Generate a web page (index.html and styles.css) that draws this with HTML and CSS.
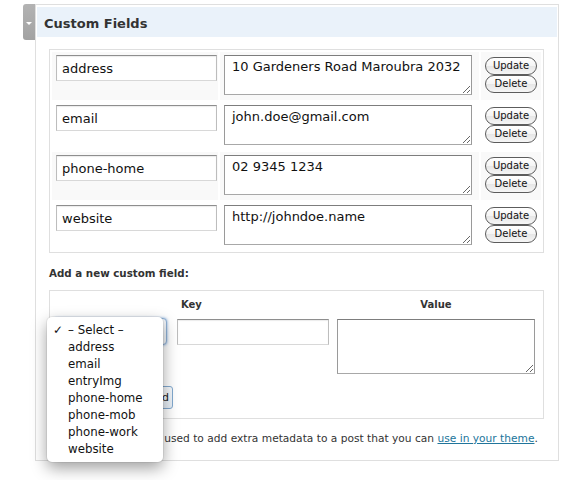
FILE: index.html
```html
<!DOCTYPE html>
<html>
<head>
<meta charset="utf-8">
<link rel="stylesheet" href="styles.css">
</head>
<body>
<div class="page">
  <div class="tab"><span class="arrow"></span></div>
  <div class="postbox">
    <h3 class="hndle">Custom Fields</h3>
    <div class="inside">
      <table class="meta">
        <tr class="alt">
          <td class="key"><input class="txt" type="text" value="address"></td>
          <td class="val"><textarea class="area">10 Gardeners Road Maroubra 2032</textarea></td>
          <td class="btns"><span class="pill">Update</span><span class="pill">Delete</span></td>
        </tr>
        <tr>
          <td class="key"><input class="txt" type="text" value="email"></td>
          <td class="val"><textarea class="area">john.doe@gmail.com</textarea></td>
          <td class="btns"><span class="pill">Update</span><span class="pill">Delete</span></td>
        </tr>
        <tr class="alt">
          <td class="key"><input class="txt" type="text" value="phone-home"></td>
          <td class="val"><textarea class="area">02 9345 1234</textarea></td>
          <td class="btns"><span class="pill">Update</span><span class="pill">Delete</span></td>
        </tr>
        <tr>
          <td class="key"><input class="txt" type="text" value="website"></td>
          <td class="val"><textarea class="area">http://johndoe.name</textarea></td>
          <td class="btns"><span class="pill">Update</span><span class="pill">Delete</span></td>
        </tr>
      </table>
      <p class="add-label">Add a new custom field:</p>
      <div class="newmeta">
        <div class="th-blank"></div>
        <div class="th th-key">Key</div>
        <div class="th th-val">Value</div>
        <div class="cell-select"><div class="fake-select"></div></div>
        <div class="cell-key"><input class="txt small" type="text"></div>
        <div class="cell-val"><textarea class="area big"></textarea></div>
        <div class="cell-submit"><span class="addbtn">Add Custom Field</span></div>
      </div>
      <p class="note">Custom fields can be used to add extra metadata to a post that you can <a href="#">use in your theme</a>.</p>
    </div>
  </div>
  <ul class="dropdown">
    <li class="checked">– Select –</li>
    <li>address</li>
    <li>email</li>
    <li>entryImg</li>
    <li>phone-home</li>
    <li>phone-mob</li>
    <li>phone-work</li>
    <li>website</li>
  </ul>
</div>
</body>
</html>
```

FILE: styles.css
```css
html, body {
  margin: 0;
  padding: 0;
  background: #fff;
}
body {
  font-family: "DejaVu Sans", Verdana, sans-serif;
  color: #333;
}
.page {
  position: relative;
  display: flex;
  align-items: flex-start;
  padding: 4px 0 0 23px;
  width: 571px;
  height: 480px;
  box-sizing: border-box;
}
.tab {
  width: 12px;
  height: 36px;
  background: linear-gradient(#b3b3b3, #a2a2a2);
  border-radius: 3px 0 0 3px;
  position: relative;
  flex: none;
}
.arrow {
  position: absolute;
  left: 3px;
  top: 18px;
  width: 0;
  height: 0;
  border-left: 3px solid transparent;
  border-right: 3px solid transparent;
  border-top: 3px solid #fff;
}
.postbox {
  width: 524px;
  height: 457px;
  box-sizing: border-box;
  border: 1px solid #dfdfdf;
  flex: none;
}
.hndle {
  margin: 2px 1px 0 1px;
  height: 26px;
  line-height: 26px;
  padding: 4px 0 0 7px;
  background: #eaf2fa;
  font-size: 13px;
  font-weight: bold;
  color: #333;
}
.inside {
  padding: 12px 14px 0 13px;
}
.meta {
  border: 1px solid #dfdfdf;
  border-spacing: 2px;
  width: 495px;
  table-layout: fixed;
}
.meta tr {
  height: 48px;
}
.meta td {
  padding: 3px 0 0 0;
  vertical-align: top;
}
.meta tr.alt td {
  background: #f9f9f9;
}
.meta td.key {
  width: 162px;
  padding-left: 4px;
}
.meta td.val {
  width: 255px;
  padding-left: 4px;
}
.meta td.btns {
  padding: 5px 0 0 4px;
}
.txt {
  display: block;
  box-sizing: border-box;
  width: 161px;
  height: 26px;
  margin: 0;
  padding: 0 5px;
  border: 1px solid;
  border-color: #8e8e8e #bdbdbd #d8d8d8 #bdbdbd;
  box-shadow: inset 0 1px 1px rgba(0,0,0,0.08);
  font-family: "DejaVu Sans", Verdana, sans-serif;
  font-size: 13px;
  color: #111;
  background: #fff;
  outline: none;
}
.txt.small {
  width: 152px;
}
.area {
  display: block;
  box-sizing: border-box;
  width: 248px;
  height: 40px;
  margin: 0;
  padding: 3px 7px;
  border: 1px solid;
  border-color: #7d7d7d #9a9a9a #a8a8a8 #9a9a9a;
  font-family: "DejaVu Sans", Verdana, sans-serif;
  font-size: 13px;
  line-height: 16px;
  color: #111;
  background: #fff;
  resize: both;
  overflow: hidden;
  outline: none;
}
.area.big {
  width: 198px;
  height: 55px;
}
.pill {
  display: block;
  box-sizing: border-box;
  width: 52px;
  height: 18px;
  line-height: 16px;
  text-align: center;
  font-size: 10px;
  color: #111;
  border: 1px solid #5c5c5c;
  border-radius: 9px;
  background: linear-gradient(#ffffff, #f4f4f4 50%, #e6e6e6 51%, #f6f6f6);
}
.add-label {
  margin: 13px 0 10px 0;
  font-size: 10.3px;
  line-height: 14px;
  font-weight: bold;
  color: #333;
}
.newmeta {
  display: grid;
  grid-template-columns: 127px 160px 206px;
  grid-template-rows: 28px 55px auto;
  row-gap: 0;
  width: 495px;
  box-sizing: border-box;
  border: 1px solid #dfdfdf;
  padding-bottom: 9px;
}
.th {
  font-size: 10px;
  font-weight: bold;
  line-height: 14px;
  padding-top: 7px;
  color: #333;
}
.th-key {
  padding-left: 4px;
}
.th-val {
  width: 198px;
  text-align: center;
}
.fake-select {
  margin: -1px 0 0 3px;
  width: 114px;
  height: 27px;
  box-sizing: border-box;
  border: 1px solid #8fb1d6;
  border-radius: 4px;
  box-shadow: 0 0 3px #7aa7dd;
  background: #f3f6fa;
}
.cell-submit {
  grid-column: 1 / span 3;
  padding-top: 12px;
}
.addbtn {
  display: inline-block;
  box-sizing: border-box;
  margin-left: 3px;
  width: 120px;
  height: 23px;
  line-height: 21px;
  padding: 0 3px;
  text-align: right;
  font-size: 11px;
  color: #222;
  border: 1px solid #82a9cf;
  border-radius: 3px;
  background: linear-gradient(#f7fafd, #e6eef6);
}
.note {
  margin: 13px 0 0 0;
  font-size: 10.65px;
  line-height: 14px;
  color: #333;
}
.note a {
  color: #21759b;
  text-decoration: underline;
}
.dropdown {
  position: absolute;
  left: 47px;
  top: 317px;
  width: 116px;
  height: 145px;
  box-sizing: border-box;
  margin: 0;
  padding: 5px 0 0 0;
  list-style: none;
  background: #fff;
  border-radius: 5px;
  box-shadow: 0 6px 16px rgba(0,0,0,0.38), 0 0 0 1px rgba(0,0,0,0.06);
  font-size: 11.8px;
  line-height: 17px;
  color: #111;
}
.dropdown li {
  position: relative;
  padding-left: 21px;
  white-space: nowrap;
}
.dropdown li.checked::before {
  content: "✓";
  position: absolute;
  left: 6px;
  top: 0;
  font-weight: bold;
}
```
